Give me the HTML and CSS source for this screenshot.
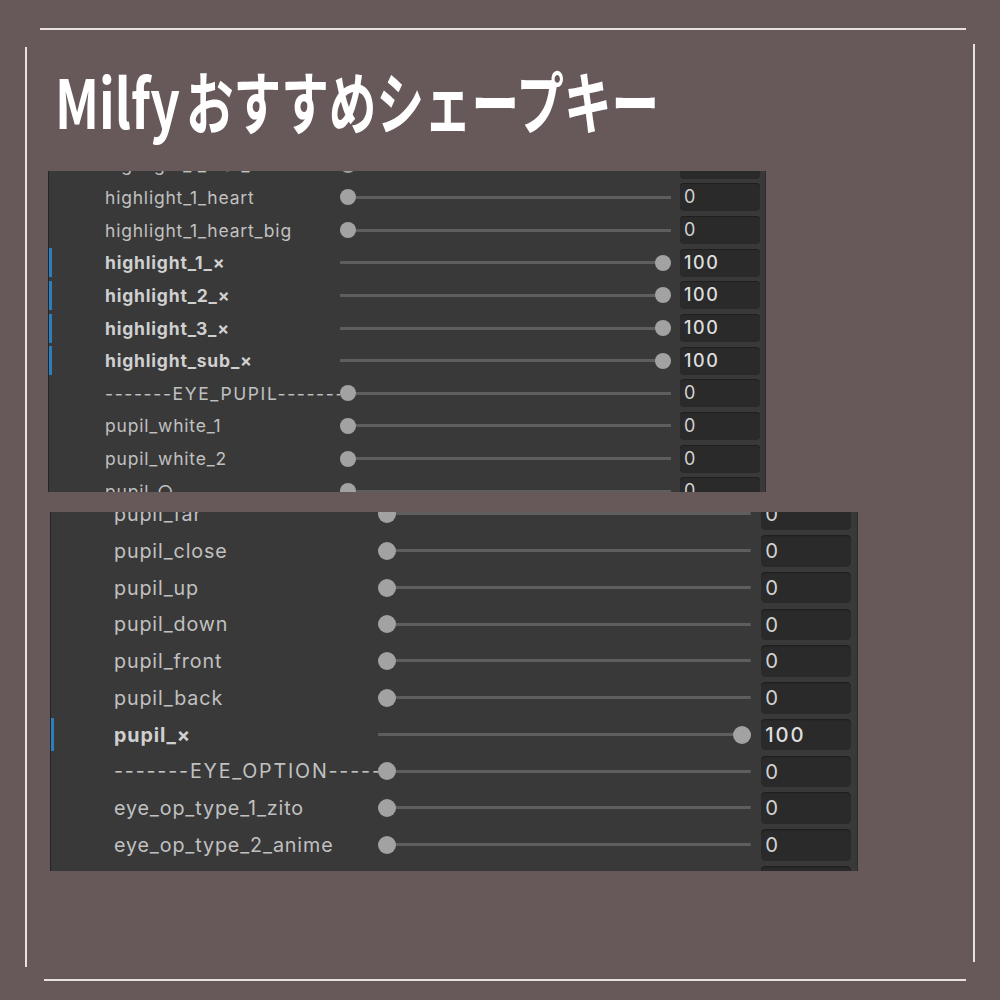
FILE: index.html
```html
<!DOCTYPE html>
<html lang="ja">
<head>
<meta charset="utf-8">
<title>Milfy おすすめシェープキー</title>
<link rel="stylesheet" href="styles.css">
</head>
<body>
<div class="page">
  <div class="rule rule-top"></div>
  <div class="middle">
    <div class="vline vline-left"></div>
    <main class="content">
      <h1 class="title"><span class="title-latin">Milfy</span><span class="title-kana">おすすめシェープキー</span></h1>

      <section class="panel panel-a">
        <div class="rows rows-a">
          <div class="row"><span class="label">highlight_1_star_center</span><span class="slider"><span class="thumb"></span></span><span class="field">0</span></div>
          <div class="row"><span class="label">highlight_1_heart</span><span class="slider"><span class="thumb"></span></span><span class="field">0</span></div>
          <div class="row"><span class="label">highlight_1_heart_big</span><span class="slider"><span class="thumb"></span></span><span class="field">0</span></div>
          <div class="row mod"><span class="label">highlight_1_×</span><span class="slider max"><span class="thumb"></span></span><span class="field">100</span></div>
          <div class="row mod"><span class="label">highlight_2_×</span><span class="slider max"><span class="thumb"></span></span><span class="field">100</span></div>
          <div class="row mod"><span class="label">highlight_3_×</span><span class="slider max"><span class="thumb"></span></span><span class="field">100</span></div>
          <div class="row mod"><span class="label">highlight_sub_×</span><span class="slider max"><span class="thumb"></span></span><span class="field">100</span></div>
          <div class="row"><span class="label dashed">-------EYE_PUPIL-------</span><span class="slider"><span class="thumb"></span></span><span class="field">0</span></div>
          <div class="row"><span class="label">pupil_white_1</span><span class="slider"><span class="thumb"></span></span><span class="field">0</span></div>
          <div class="row"><span class="label">pupil_white_2</span><span class="slider"><span class="thumb"></span></span><span class="field">0</span></div>
          <div class="row"><span class="label">pupil_○</span><span class="slider"><span class="thumb"></span></span><span class="field">0</span></div>
        </div>
      </section>

      <section class="panel panel-b">
        <div class="rows rows-b">
          <div class="row"><span class="label">pupil_far</span><span class="slider"><span class="thumb"></span></span><span class="field">0</span></div>
          <div class="row"><span class="label">pupil_close</span><span class="slider"><span class="thumb"></span></span><span class="field">0</span></div>
          <div class="row"><span class="label">pupil_up</span><span class="slider"><span class="thumb"></span></span><span class="field">0</span></div>
          <div class="row"><span class="label">pupil_down</span><span class="slider"><span class="thumb"></span></span><span class="field">0</span></div>
          <div class="row"><span class="label">pupil_front</span><span class="slider"><span class="thumb"></span></span><span class="field">0</span></div>
          <div class="row"><span class="label">pupil_back</span><span class="slider"><span class="thumb"></span></span><span class="field">0</span></div>
          <div class="row mod"><span class="label">pupil_×</span><span class="slider max"><span class="thumb"></span></span><span class="field">100</span></div>
          <div class="row"><span class="label dashed">-------EYE_OPTION-------</span><span class="slider"><span class="thumb"></span></span><span class="field">0</span></div>
          <div class="row"><span class="label">eye_op_type_1_zito</span><span class="slider"><span class="thumb"></span></span><span class="field">0</span></div>
          <div class="row"><span class="label">eye_op_type_2_anime</span><span class="slider"><span class="thumb"></span></span><span class="field">0</span></div>
          <div class="row"><span class="label"></span><span class="slider"><span class="thumb"></span></span><span class="field">0</span></div>
        </div>
      </section>
    </main>
    <div class="vline vline-right"></div>
  </div>
  <div class="rule rule-bottom"></div>
</div>
</body>
</html>
```

FILE: styles.css
```css
* {
  box-sizing: border-box;
}

html,
body {
  margin: 0;
  padding: 0;
}

body {
  background: #675859;
  font-family: Inter, "Noto Sans", "Noto Sans CJK JP", sans-serif;
}

.page {
  width: 1000px;
  height: 1000px;
  padding-top: 28px;
  overflow: hidden;
}

/* frame rules: four separate light strokes */
.rule {
  height: 2px;
  background: #e8e1e1;
}

.rule-top {
  margin-left: 40px;
  width: 926px;
}

.rule-bottom {
  margin-left: 44px;
  width: 922px;
  margin-top: 12px;
}

.middle {
  display: flex;
  align-items: flex-start;
  height: 937px;
}

.vline {
  width: 2px;
  background: #e8e1e1;
  flex: none;
}

.vline-left {
  margin-left: 25px;
  margin-top: 17px;
  height: 920px;
}

.vline-right {
  margin-top: 14px;
  height: 918px;
}

.content {
  width: 946px;
  flex: none;
}

/* heading: condensed heavy lettering */
.title {
  display: flex;
  align-items: baseline;
  margin: 36px 0 0 28px;
  height: 68px;
  font-family: "Noto Sans CJK JP", sans-serif;
  font-weight: 700;
  font-size: 68px;
  line-height: 68px;
  color: #ffffff;
  white-space: nowrap;
}

.title-latin {
  display: inline-block;
  flex: none;
  width: 131px;
  transform: scaleX(0.76);
  transform-origin: left center;
}

.title-kana {
  display: inline-block;
  transform: scaleX(0.7);
  transform-origin: left center;
}

/* inspector panels */
.panel {
  background: #393939;
  border-left: 1px solid #252525;
  border-right: 1px solid #2d2d2d;
  overflow: hidden;
  width: 718px;
}

.panel-a {
  margin: 37px 0 0 21px;
  height: 321px;
}

.panel-b {
  zoom: 1.125;
  margin: 17.8px 0 0 20.4px;
  height: 319px;
}

.rows-a {
  margin-top: -22.6px;
}

.rows-b {
  margin-top: -14.5px;
}

.row {
  display: flex;
  align-items: center;
  height: 32.67px;
  color: #c1c1c1;
  font-size: 17.5px;
  letter-spacing: 0.8px;
}

.row::before {
  content: "";
  flex: none;
  width: 3px;
  height: 29px;
  margin-right: 53px;
}

.row.mod::before {
  background: #2b7fbf;
}

.row.mod .label {
  font-weight: 700;
  color: #d0d0d0;
}

.label {
  flex: none;
  width: 235px;
  white-space: nowrap;
  overflow: hidden;
}

/* separator rows run their dashes up to the slider */
.label.dashed {
  letter-spacing: 1.6px;
}

.slider {
  flex: none;
  width: 331px;
  height: 16px;
  display: flex;
  align-items: center;
  background: linear-gradient(#5e5e5e, #5e5e5e) center / 100% 3px no-repeat;
}

.slider.max {
  justify-content: flex-end;
}

.thumb {
  width: 16px;
  height: 16px;
  border-radius: 50%;
  background: #a2a2a2;
}

.field {
  flex: none;
  width: 80px;
  height: 28px;
  margin-left: 9px;
  padding-left: 4px;
  border-radius: 4px;
  background: #2a2a2a;
  box-shadow: inset 0 1px 0 #1f1f1f;
  color: #d2d2d2;
  font-size: 18px;
  letter-spacing: 1.6px;
  line-height: 28px;
}

.row.mod .field {
  font-weight: 500;
  color: #dedede;
}
```
